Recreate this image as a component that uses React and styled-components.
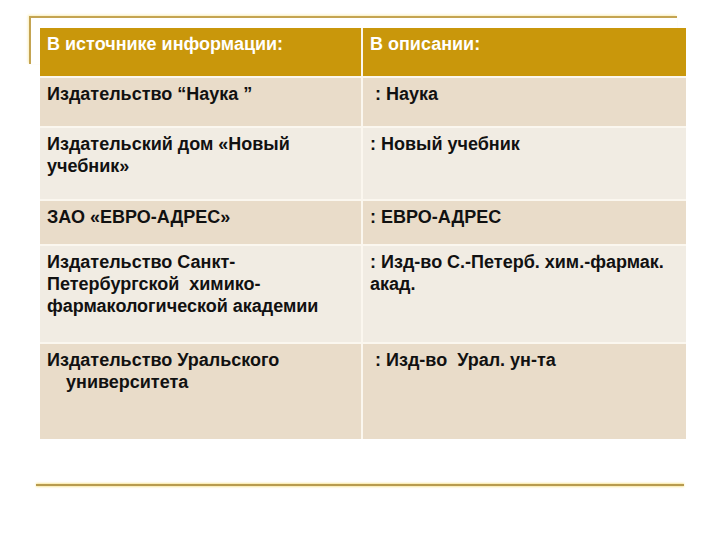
import React from "react";
import styled, { createGlobalStyle } from "styled-components";

const Global = createGlobalStyle`
  html, body { margin: 0; padding: 0; background: #ffffff; }
  body { font-family: "Liberation Sans", Arial, sans-serif; }
`;

const Slide = styled.div`
  width: 720px;
  height: 540px;
  background: #ffffff;
  padding-top: 16px;
  box-sizing: border-box;
  overflow: hidden;
`;

const TopFrame = styled.div`
  margin-left: 29px;
  width: 648px;
  height: 48px;
  border-top: 2px solid #c4a452;
  border-left: 2px solid #c4a452;
  box-shadow: -1px -1px 2px rgba(250, 235, 170, 0.8);
  box-sizing: border-box;
`;

const Table = styled.div`
  margin-left: 40px;
  margin-top: -36px;
  width: 646px;
  display: grid;
  grid-template-columns: 321px 323px;
  grid-template-rows: 48px 48px 71px 43px 96px 95px;
  gap: 2px;
  background: #fbf7ef;
  position: relative;
`;

const Cell = styled.div`
  padding: 5px 7px 0 7px;
  font-size: 18px;
  line-height: 22px;
  font-weight: bold;
  color: ${(p) => (p.$head ? "#ffffff" : "#111111")};
  background: ${(p) =>
    p.$head ? "#c9970b" : p.$dark ? "#e9dcc9" : "#f1ece3"};
  white-space: pre-wrap;
`;

const Hang = styled.span`
  display: block;
  padding-left: ${(p) => p.$pad}px;
`;

const BottomLine = styled.div`
  margin-left: 36px;
  margin-top: 45px;
  width: 648px;
  height: 2px;
  background: #b89b4e;
  box-shadow: 0 -1px 2px rgba(250, 230, 150, 0.9), 0 1px 2px rgba(250, 230, 150, 0.9);
`;

const rows = [
  { a: "Издательство “Наука ”", b: " : Наука", dark: true },
  { a: "Издательский дом «Новый учебник»", b: ": Новый учебник", dark: false },
  { a: "ЗАО «ЕВРО-АДРЕС»", b: ": ЕВРО-АДРЕС", dark: true },
  {
    a: "Издательство Санкт-Петербургской  химико-фармакологической академии",
    b: ": Изд-во С.-Петерб. хим.-фармак. акад.",
    dark: false,
  },
  { a: null, b: " : Изд-во  Урал. ун-та", dark: true },
];

export default function App() {
  return (
    <>
      <Global />
      <Slide>
        <TopFrame />
        <Table>
          <Cell $head>В источнике информации:</Cell>
          <Cell $head>В описании:</Cell>
          {rows.map((r, i) => (
            <React.Fragment key={i}>
              <Cell $dark={r.dark}>
                {r.a === null ? (
                  <>
                    Издательство Уральского
                    <Hang $pad={19}>университета</Hang>
                  </>
                ) : (
                  r.a
                )}
              </Cell>
              <Cell $dark={r.dark}>{r.b}</Cell>
            </React.Fragment>
          ))}
        </Table>
        <BottomLine />
      </Slide>
    </>
  );
}
